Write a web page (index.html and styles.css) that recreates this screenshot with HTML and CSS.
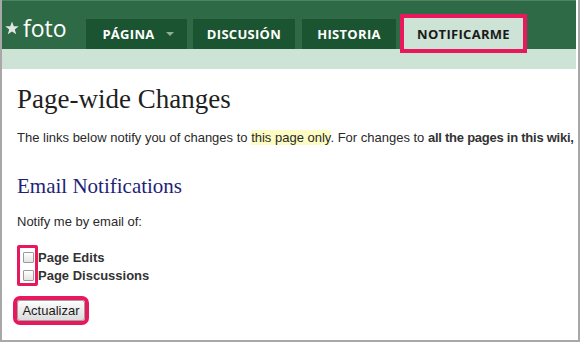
FILE: index.html
```html
<!DOCTYPE html>
<html lang="es">
<head>
    <meta charset="UTF-8">
    <meta name="viewport" content="width=device-width, initial-scale=1.0">
    <title>Notificarme - foto</title>
    <link rel="stylesheet" href="styles.css">
</head>
<body>
    <div class="frame">
        <div class="header">
            <div class="logo">
                <svg class="star" width="14" height="14" viewBox="0 0 24 24"><polygon points="12,1 15,9 23.5,9.2 16.8,14.4 19.2,22.8 12,17.8 4.8,22.8 7.2,14.4 0.5,9.2 9,9" fill="#e2e6e3"/></svg>
                <span>foto</span>
            </div>
            <ul class="tabs">
                <li class="tab tab-page">PÁGINA <span class="caret"></span></li>
                <li class="tab tab-disc">DISCUSIÓN</li>
                <li class="tab tab-hist">HISTORIA</li>
                <li class="tab tab-notify active">NOTIFICARME</li>
            </ul>
        </div>
        <div class="band"></div>

        <div class="content">
            <h1>Page-wide Changes</h1>
            <p class="intro">The links below notify you of changes to <span class="hl">this page only</span>. For changes to <b>all the pages in this wiki,</b></p>

            <h2>Email Notifications</h2>
            <p class="notify">Notify me by email of:</p>

            <div class="options">
                <label class="opt"><input type="checkbox"> Page Edits</label>
                <label class="opt"><input type="checkbox"> Page Discussions</label>
                <div class="mark"></div>
            </div>

            <button class="save">Actualizar</button>
        </div>
    </div>
</body>
</html>
```

FILE: styles.css
```css
body {
    margin: 0;
    background: #ffffff;
    font-family: "Liberation Sans", Arial, sans-serif;
    color: #2a2a2a;
}

.frame {
    width: 580px;
    height: 342px;
    box-sizing: border-box;
    border-left: 2px solid #a8a8a8;
    border-right: 2px solid #a8a8a8;
    border-bottom: 2px solid #a8a8a8;
    overflow: hidden;
}

/* cabecera verde con las pestañas */
.header {
    height: 49px;
    margin-right: 2px;
    box-sizing: border-box;
    border-top: 1px solid #4f8363;
    background: #2e6a45;
    display: flex;
    align-items: flex-end;
}

.logo {
    width: 84px;
    height: 48px;
    box-sizing: border-box;
    padding-left: 3px;
    padding-top: 5px;
    display: flex;
    align-items: center;
    gap: 4px;
    color: #ffffff;
    font-family: "Open Sans", sans-serif;
    font-size: 23px;
}

.tabs {
    list-style: none;
    margin: 0;
    padding: 0;
    display: flex;
    align-items: flex-end;
}

.tab {
    height: 30px;
    box-sizing: border-box;
    display: flex;
    align-items: center;
    justify-content: center;
    background: #1b5430;
    color: #ffffff;
    font-family: "Open Sans", sans-serif;
    font-weight: 700;
    font-size: 13px;
    letter-spacing: 0.3px;
}

.tab-page {
    width: 101px;
    padding-left: 3px;
}

.tab-disc {
    width: 102px;
    margin-left: 6px;
}

.tab-hist {
    width: 94px;
    margin-left: 7px;
}

.caret {
    margin-left: 11px;
    width: 0;
    height: 0;
    border-left: 4px solid transparent;
    border-right: 4px solid transparent;
    border-top: 4px solid #8fae99;
}

.tab.active {
    position: relative;
    z-index: 1;
    width: 119px;
    height: 31px;
    margin-left: 8px;
    padding-top: 1px;
    background: #cde3d5;
    color: #1a1a1a;
    outline: 4px solid #e8185c;
}

.band {
    height: 20px;
    margin-right: 2px;
    background: #cde3d5;
}

/* contenido */
.content {
    padding-left: 15px;
}

h1 {
    margin: 14px 0 0;
    font-family: "Liberation Serif", Georgia, serif;
    font-weight: normal;
    font-size: 27px;
    line-height: 32px;
    color: #1f1f1f;
}

.intro {
    margin: 15px 0 0;
    font-size: 13px;
    line-height: 16px;
    white-space: nowrap;
}

.hl {
    background: #fdfcc2;
}

.intro b {
    color: #333333;
    letter-spacing: -0.25px;
}

h2 {
    margin: 28px 0 0;
    font-family: "Liberation Serif", Georgia, serif;
    font-weight: normal;
    font-size: 21px;
    line-height: 24px;
    color: #1f1f78;
}

.notify {
    margin: 16px 0 0;
    font-size: 13px;
    line-height: 15px;
}

.options {
    position: relative;
    margin-top: 19px;
}

.opt {
    display: flex;
    align-items: center;
    height: 18px;
    font-size: 13px;
    font-weight: 700;
    color: #333333;
}

.opt input {
    appearance: none;
    margin: 0 4px 0 6px;
    width: 11px;
    height: 11px;
    border: 1px solid #9a9a9a;
    border-radius: 1px;
    background: linear-gradient(#ffffff, #e4e4e4);
}

/* recuadro rosa que resalta las casillas */
.mark {
    position: absolute;
    left: 0;
    top: -3px;
    width: 15px;
    height: 35px;
    border: 3px solid #e8185c;
    border-radius: 2px;
}

.save {
    margin-top: 16px;
    height: 21px;
    width: 68px;
    padding: 0;
    font-family: "Liberation Sans", Arial, sans-serif;
    font-size: 13px;
    color: #1a1a1a;
    border: 1px solid #a0a0a0;
    border-radius: 3px;
    background: linear-gradient(#fdfdfd, #dcdcdc);
    outline: 4px solid #e8185c;
}
```
